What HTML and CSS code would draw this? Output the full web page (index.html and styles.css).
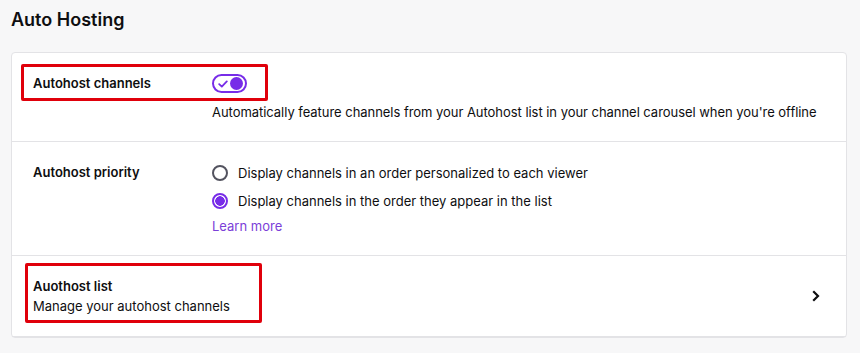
FILE: index.html
```html
<!DOCTYPE html>
<html lang="en">
<head>
<meta charset="utf-8">
<title>Auto Hosting</title>
<link rel="stylesheet" href="styles.css">
</head>
<body>
<main class="page">
  <h2 class="page-title">Auto Hosting</h2>
  <section class="card">
    <div class="row">
      <div class="row-label">Autohost channels</div>
      <div class="row-control">
        <label class="toggle">
          <span class="toggle-track">
            <svg class="toggle-check" width="10" height="8" viewBox="0 0 10 8"><path d="M1.2 4.2 L3.8 6.6 L8.8 1.4" fill="none" stroke="#772ce8" stroke-width="1.8" stroke-linecap="round" stroke-linejoin="round"/></svg>
            <span class="toggle-knob"></span>
          </span>
        </label>
        <p class="desc">Automatically feature channels from your Autohost list in your channel carousel when you're offline</p>
      </div>
    </div>
    <div class="row">
      <div class="row-label">Autohost priority</div>
      <div class="row-control radios">
        <label class="radio"><span class="radio-dot"></span>Display channels in an order personalized to each viewer</label>
        <label class="radio"><span class="radio-dot checked"></span>Display channels in the order they appear in the list</label>
        <a class="link" href="#">Learn more</a>
      </div>
    </div>
    <div class="row row-link">
      <div class="link-text">
        <div class="row-label">Auothost list</div>
        <div class="sub">Manage your autohost channels</div>
      </div>
      <svg class="chevron" width="10" height="12" viewBox="0 0 10 12"><path d="M3 2 L7 6 L3 10" fill="none" stroke="#0e0e10" stroke-width="2.2" stroke-linecap="square" stroke-linejoin="miter"/></svg>
    </div>
    <div class="mark mark-one"></div>
    <div class="mark mark-two"></div>
  </section>
</main>
</body>
</html>
```

FILE: styles.css
```css
* { box-sizing: border-box; }
html, body { margin: 0; padding: 0; }
body {
  background: #f7f7f8;
  font-family: Inter, "Noto Sans", sans-serif;
  color: #0e0e10;
  font-size: 13px;
}
.page {
  padding: 0 13px 0 11px;
}
.page-title {
  margin: 0;
  padding-top: 8px;
  height: 52px;
  font-size: 18px;
  font-weight: 600;
  line-height: 24px;
}
.card {
  position: relative;
  background: #fff;
  border: 1px solid #e3e3e6;
  border-radius: 4px;
  width: 836px;
}
.row {
  display: grid;
  grid-template-columns: 179px 1fr;
  padding: 19px 20px 19px 21px;
  border-bottom: 1px solid #e3e3e6;
}
.row:last-of-type { border-bottom: 0; }
.row-label {
  font-weight: 600;
  line-height: 20px;
  padding-top: 1px;
}
.row-control { display: flex; flex-direction: column; }
.toggle { display: block; height: 22px; padding-top: 2px; }
.toggle-track {
  display: flex;
  align-items: center;
  justify-content: space-between;
  width: 35px;
  height: 19px;
  border: 2px solid #772ce8;
  border-radius: 10px;
  padding: 0 2px 0 4px;
}
.toggle-knob {
  width: 13px;
  height: 13px;
  border-radius: 50%;
  background: #772ce8;
}
.desc {
  margin: 8px 0 0;
  line-height: 20px;
  letter-spacing: -0.04px;
}
.radios { gap: 6px; padding-top: 1px; }
.radio {
  display: flex;
  align-items: center;
  gap: 10px;
  height: 22px;
  line-height: 20px;
}
.radio-dot {
  width: 16px;
  height: 16px;
  border: 2px solid #53535f;
  border-radius: 50%;
  flex: none;
}
.radio-dot.checked {
  border-color: #772ce8;
  background: radial-gradient(circle, #772ce8 0 4.5px, #fff 5px);
}
.link {
  color: #7b40d8;
  text-decoration: none;
  line-height: 20px;
  margin-top: -2px;
}
.row-link {
  display: flex;
  align-items: center;
  justify-content: space-between;
  padding: 19px 25px 20px 21px;
}
.sub { line-height: 20px; }
.mark {
  position: absolute;
  border: 3px solid #e0000b;
  border-radius: 2px;
  pointer-events: none;
}
.mark-one { left: 9px; top: 11px; width: 247px; height: 37px; }
.mark-two { left: 13px; top: 210px; width: 237px; height: 60px; }
```
